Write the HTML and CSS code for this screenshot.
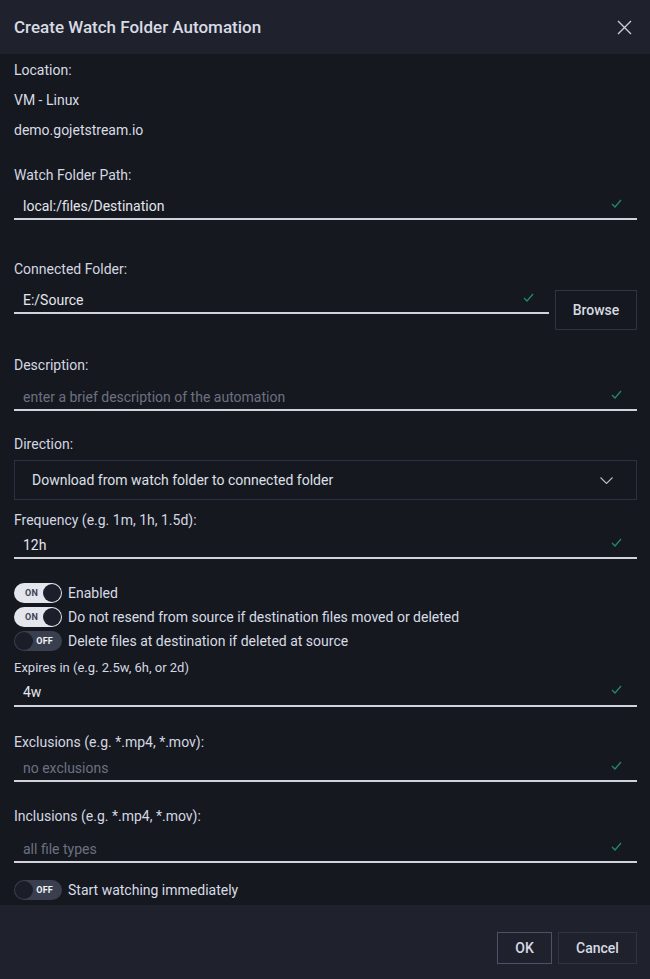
FILE: index.html
```html
<!DOCTYPE html>
<html lang="en">
<head>
<meta charset="utf-8">
<title>Create Watch Folder Automation</title>
<link rel="stylesheet" href="styles.css">
</head>
<body>
<div class="dialog">
  <header class="dlg-head">
    <h1 class="dlg-title">Create Watch Folder Automation</h1>
    <button class="close-btn" aria-label="Close">
      <svg width="15" height="15" viewBox="0 0 15 15"><path d="M1 1L14 14M14 1L1 14" stroke="#c9cdd7" stroke-width="1.4" fill="none"/></svg>
    </button>
  </header>
  <main class="dlg-body">
    <div class="loc">
      <div class="loc-line">Location:</div>
      <div class="loc-line">VM - Linux</div>
      <div class="loc-line">demo.gojetstream.io</div>
    </div>

    <div class="field f-watch">
      <label class="label">Watch Folder Path:</label>
      <div class="input pt11"><span class="val">local:/files/Destination</span><svg class="check" viewBox="0 0 11 9"><path d="M1 5L4 8L10 1" stroke="#1f8a6c" stroke-width="1.3" fill="none"/></svg></div>
    </div>

    <div class="field f-conn">
      <label class="label">Connected Folder:</label>
      <div class="row">
        <div class="input pt11 grow"><span class="val">E:/Source</span><svg class="check" viewBox="0 0 11 9"><path d="M1 5L4 8L10 1" stroke="#1f8a6c" stroke-width="1.3" fill="none"/></svg></div>
        <button class="btn browse">Browse</button>
      </div>
    </div>

    <div class="field f-desc">
      <label class="label">Description:</label>
      <div class="input pt12"><span class="val ph">enter a brief description of the automation</span><svg class="check" viewBox="0 0 11 9"><path d="M1 5L4 8L10 1" stroke="#1f8a6c" stroke-width="1.3" fill="none"/></svg></div>
    </div>

    <div class="field f-dir">
      <label class="label">Direction:</label>
      <div class="select"><span class="val">Download from watch folder to connected folder</span><svg class="chev" viewBox="0 0 13 7"><path d="M0.5 0.5L6.5 6.5L12.5 0.5" stroke="#b9bdc8" stroke-width="1.1" fill="none"/></svg></div>
    </div>

    <div class="field f-freq">
      <label class="label">Frequency (e.g. 1m, 1h, 1.5d):</label>
      <div class="input pt5"><span class="val">12h</span><svg class="check" viewBox="0 0 11 9"><path d="M1 5L4 8L10 1" stroke="#1f8a6c" stroke-width="1.3" fill="none"/></svg></div>
    </div>

    <div class="toggles f-tog">
      <div class="trow"><span class="toggle on"><span class="tl">ON</span><span class="knob"></span></span><span class="ttext">Enabled</span></div>
      <div class="trow"><span class="toggle on"><span class="tl">ON</span><span class="knob"></span></span><span class="ttext">Do not resend from source if destination files moved or deleted</span></div>
      <div class="trow"><span class="toggle off"><span class="knob"></span><span class="tl">OFF</span></span><span class="ttext">Delete files at destination if deleted at source</span></div>
    </div>

    <div class="field f-exp">
      <label class="label small">Expires in (e.g. 2.5w, 6h, or 2d)</label>
      <div class="input pt4 pb3"><span class="val">4w</span><svg class="check" viewBox="0 0 11 9"><path d="M1 5L4 8L10 1" stroke="#1f8a6c" stroke-width="1.3" fill="none"/></svg></div>
    </div>

    <div class="field f-excl">
      <label class="label">Exclusions (e.g. *.mp4, *.mov):</label>
      <div class="input pt6"><span class="val ph">no exclusions</span><svg class="check" viewBox="0 0 11 9"><path d="M1 5L4 8L10 1" stroke="#1f8a6c" stroke-width="1.3" fill="none"/></svg></div>
    </div>

    <div class="field f-incl">
      <label class="label">Inclusions (e.g. *.mp4, *.mov):</label>
      <div class="input pt13"><span class="val ph">all file types</span><svg class="check" viewBox="0 0 11 9"><path d="M1 5L4 8L10 1" stroke="#1f8a6c" stroke-width="1.3" fill="none"/></svg></div>
    </div>

    <div class="toggles f-start">
      <div class="trow"><span class="toggle off"><span class="knob"></span><span class="tl">OFF</span></span><span class="ttext">Start watching immediately</span></div>
    </div>
  </main>
  <footer class="dlg-foot">
    <button class="btn ok">OK</button>
    <button class="btn cancel">Cancel</button>
  </footer>
</div>
</body>
</html>
```

FILE: styles.css
```css
* { box-sizing: border-box; }
html, body { margin: 0; padding: 0; }
body {
  background: #161820;
  font-family: Roboto, "Liberation Sans", sans-serif;
  color: #d6dae2;
  font-size: 14px;
}
.dialog {
  width: 650px;
  height: 979px;
  display: flex;
  flex-direction: column;
  background: #161820;
}
.dlg-head {
  height: 54px;
  flex: 0 0 54px;
  background: #1f222d;
  display: flex;
  align-items: center;
  justify-content: space-between;
  padding: 0 18px 0 14px;
}
.dlg-title {
  margin: 0;
  font-size: 17px;
  line-height: 20px;
  font-weight: 500;
  color: #d7dbe4;
}
.close-btn {
  background: none;
  border: 0;
  padding: 0;
  width: 15px;
  height: 15px;
  display: flex;
}
.dlg-body {
  flex: 1;
  padding: 1px 13px 0 14px;
}
.loc-line { line-height: 30px; color: #d8dce4; }
.label {
  display: block;
  line-height: 20px;
  color: #d3d7e0;
}
.label.small { font-size: 13px; }
.input {
  display: flex;
  align-items: flex-start;
  line-height: 20px;
  padding: 11px 0 2px 9px;
  border-bottom: 2px solid #d0d3dc;
  color: #e3e6ec;
}
.input .val { flex: 1; }
.val.ph { color: #6c7180; }
.check {
  width: 11px;
  height: 9px;
  margin: 3px 15px 0 0;
}
.pt4 { padding-top: 4px; }
.pt5 { padding-top: 5px; }
.pt6 { padding-top: 6px; }
.pt11 { padding-top: 11px; }
.pt12 { padding-top: 12px; }
.pt13 { padding-top: 13px; }
.pb3 { padding-bottom: 3px; }
.row { display: flex; align-items: flex-start; }
.grow { flex: 1; }
.btn {
  background: transparent;
  font-family: Roboto, "Liberation Sans", sans-serif;
  font-size: 14px;
  font-weight: 500;
  color: #d6dae3;
  border: 1px solid #2f3342;
  padding: 0;
}
.browse {
  width: 82px;
  height: 40px;
  margin: 11px 0 0 6px;
}
.select {
  margin-top: 6px;
  height: 40px;
  border: 1px solid #2d3040;
  display: flex;
  align-items: center;
  justify-content: space-between;
  padding: 0 23px 0 17px;
  color: #dde0e7;
}
.chev { width: 13px; height: 7px; }

.f-watch { margin-top: 20px; }
.f-conn { margin-top: 39px; }
.f-desc { margin-top: 25px; }
.f-dir { margin-top: 23px; }
.f-freq { margin-top: 10px; }
.f-tog { margin-top: 24px; }
.f-exp { margin-top: 7px; }
.f-excl { margin-top: 25px; }
.f-incl { margin-top: 24px; }
.f-start { margin-top: 17px; }

.toggles { display: flex; flex-direction: column; gap: 4px; }
.trow { display: flex; align-items: center; gap: 6px; height: 20px; }
.ttext { color: #d8dce5; line-height: 20px; }
.toggle {
  width: 48px;
  height: 20px;
  border-radius: 10px;
  display: flex;
  align-items: center;
  justify-content: space-between;
  padding: 0 1px;
}
.toggle .knob {
  width: 18px;
  height: 18px;
  border-radius: 50%;
}
.toggle .tl {
  font-size: 9px;
  font-weight: 700;
  letter-spacing: 0.2px;
}
.toggle.on { background: #e3e6ec; padding-left: 11px; }
.toggle.on .knob { background: #1c1f2b; }
.toggle.on .tl { color: #3d4253; }
.toggle.off { background: #3a3f4f; padding-right: 9px; }
.toggle.off .knob { background: #1b1e28; }
.toggle.off .tl { color: #f1f3f6; }

.dlg-foot {
  height: 74px;
  flex: 0 0 74px;
  background: #1f222d;
  display: flex;
  justify-content: flex-end;
  align-items: flex-start;
  gap: 6px;
  padding: 27px 13px 0 0;
}
.ok { width: 55px; height: 32px; border-color: #4b5369; }
.cancel { width: 79px; height: 32px; border-color: #30343f; }
```
